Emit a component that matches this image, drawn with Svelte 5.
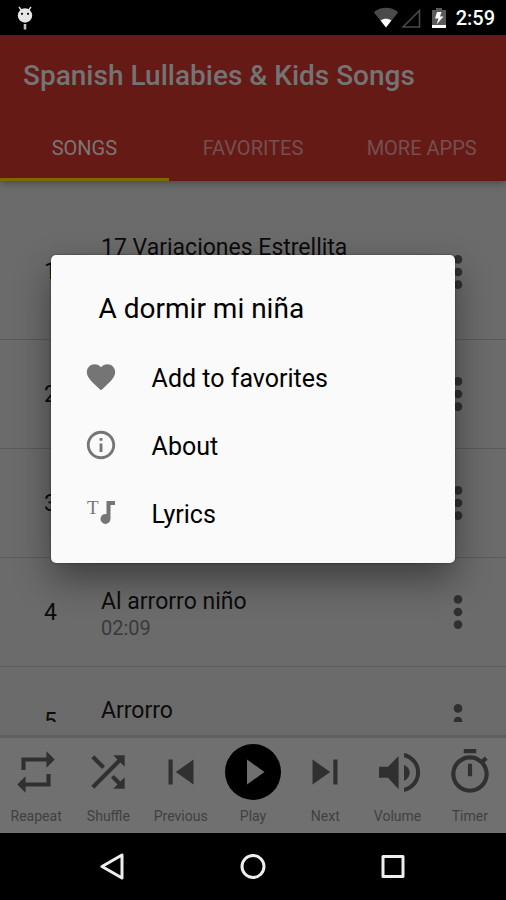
<script lang="ts">
  type Song = { id: number; title?: string; duration?: string; tall?: boolean };

  const tabs = ['SONGS', 'FAVORITES', 'MORE APPS'];
  let activeTab = $state('SONGS');
  let dialogOpen = $state(true);

  const songs: Song[] = [
    { id: 1, title: '17 Variaciones Estrellita', tall: true },
    { id: 2 },
    { id: 3 },
    { id: 4, title: 'Al arrorro niño', duration: '02:09' },
    { id: 5, title: 'Arrorro' },
  ];

  const controls = [
    { label: 'Reapeat', path: 'M7 7h10v3l4-4-4-4v3H5v6h2V7zm10 10H7v-3l-4 4 4 4v-3h12v-6h-2v4z' },
    {
      label: 'Shuffle',
      path: 'M10.59 9.17L5.41 4 4 5.41l5.17 5.17 1.42-1.41zM14.5 4l2.04 2.04L4 18.59 5.41 20 17.96 7.46 20 9.5V4h-5.5zm.33 9.41l-1.41 1.41 3.13 3.13L14.5 20H20v-5.5l-2.04 2.04-3.13-3.13z',
    },
    { label: 'Previous', path: 'M6 6h2v12H6zm3.5 6l8.5 6V6z' },
    { label: 'Play', path: '' },
    { label: 'Next', path: 'M6 18l8.5-6L6 6v12zM16 6v12h2V6h-2z' },
    {
      label: 'Volume',
      path: 'M2.9 9.5v5.3h4.3l5.1 5.5V4.3L7.2 9.5zM14.9 8.6c1.6.6 2.7 2 2.7 3.7s-1.1 3.2-2.7 3.9zM14.9 2.9v2c3.4.8 5.8 3.8 5.8 7.3s-2.4 6.5-5.8 7.3v2.1c4.4-.9 7.700-4.800 7.700-9.400s-3.300-8.400-7.700-9.300z',
    },
    {
      label: 'Timer',
      path: 'M15 1H9v2h6V1zm-4 13h2V8h-2v6zm8.03-6.61l1.42-1.42c-.43-.51-.9-.99-1.41-1.41l-1.42 1.42C16.07 4.74 14.12 4 12 4c-4.97 0-9 4.03-9 9s4.02 9 9 9 9-4.03 9-9c0-2.12-.74-4.07-1.97-5.61zM12 20c-3.87 0-7-3.13-7-7s3.13-7 7-7 7 3.13 7 7-3.13 7-7 7z',
    },
  ];
</script>

<div class="screen">
  <div class="status-bar">
    <svg class="debug" width="16" height="24" viewBox="0 0 16 24" aria-hidden="true">
      <path d="M2 1l3 4M14 1l-3 4" stroke="#e6e6e6" stroke-width="1.4" />
      <circle cx="8" cy="9.5" r="7.2" fill="#e6e6e6" />
      <circle cx="5" cy="7.800" r="1.1" />
      <circle cx="11" cy="7.800" r="1.1" />
      <path d="M8 18v5.500" stroke="#c4c4c4" stroke-width="2.6" />
    </svg>
    <svg width="26" height="22" viewBox="0 0 26 22" aria-hidden="true">
      <path d="M.8 5.2C8 -.6 18 -.6 25.2 5.2L13 20.4z" fill="#4a4a4a" />
      <path d="M7.6 13.6c3.2-2.4 7.6-2.4 10.8 0L13 20.4z" fill="#fff" />
    </svg>
    <svg class="signal" width="20" height="22" viewBox="0 0 20 22" aria-hidden="true">
      <path d="M2 20L18.5 3.5V20z" fill="none" stroke="#4a4a4a" stroke-width="1.6" />
    </svg>
    <svg class="battery" width="14" height="22" viewBox="0 0 14 22" aria-hidden="true">
      <path d="M4 1h6v2h4v18H0V3h4z" fill="#5a5a5a" />
      <path d="M0 18h14v3H0z" fill="#fff" />
      <path d="M9.5 5H5L3 11.5h3.5L4.5 17.5 11.5 9.5H8z" fill="#fff" />
    </svg>
    <span class="clock">2:59</span>
  </div>

  <header class="app-bar">
    <h1>Spanish Lullabies &amp; Kids Songs</h1>
    <nav class="tabs">
      {#each tabs as tab (tab)}
        <button class="tab" class:active={activeTab === tab} onclick={() => (activeTab = tab)}>{tab}</button>
      {/each}
    </nav>
  </header>

  <main class="content">
    <ul class="songs">
      {#each songs as song (song.id)}
        <li class="song">
          <span class="number">{song.id}</span>
          <div class="info" class:tall={song.tall}>
            {#if song.title}
              <span class="title">{song.title}</span>
            {/if}
            {#if song.duration}
              <span class="duration">{song.duration}</span>
            {/if}
          </div>
          <button class="more" aria-label="Song options" onclick={() => (dialogOpen = true)}>
            <svg width="10" height="36" viewBox="0 0 10 36" aria-hidden="true">
              <circle cx="5" cy="5.4" r="4.3" />
              <circle cx="5" cy="18" r="4.3" />
              <circle cx="5" cy="30.6" r="4.3" />
            </svg>
          </button>
        </li>
      {/each}
    </ul>
  </main>

  <footer class="player">
    {#each controls as control (control.label)}
      <button class="control">
        {#if control.label === 'Play'}
          <svg width="56" height="56" viewBox="0 0 56 56" aria-hidden="true">
            <circle cx="28" cy="28" r="28" fill="#000" />
            <path d="M22 15.5v25l17.5-12.5z" fill="#707070" />
          </svg>
        {:else}
          <svg width="50" height="56" viewBox="0 0 24 24" aria-hidden="true"><path d={control.path} /></svg>
        {/if}
        <span>{control.label}</span>
      </button>
    {/each}
  </footer>

  <nav class="system-nav">
    <button aria-label="Back">
      <svg width="28" height="28" viewBox="0 0 28 28" aria-hidden="true"><path d="M3 13.5L23 2v23z" /></svg>
    </button>
    <button aria-label="Home">
      <svg width="28" height="28" viewBox="0 0 28 28" aria-hidden="true"><circle cx="14" cy="13.5" r="11" /></svg>
    </button>
    <button aria-label="Recent apps">
      <svg width="28" height="28" viewBox="0 0 28 28" aria-hidden="true"><rect x="4" y="3.5" width="20" height="20" /></svg>
    </button>
  </nav>

  {#if dialogOpen}
    <div class="overlay">
      <div class="dialog" role="dialog" aria-labelledby="dialog-title">
        <h2 id="dialog-title">A dormir mi niña</h2>
        <button class="option">
          <svg width="34" height="34" viewBox="0 0 24 24" aria-hidden="true">
            <path d="M12 21.35l-1.45-1.32C5.4 15.36 2 12.28 2 8.5 2 5.42 4.42 3 7.5 3c1.74 0 3.41.81 4.5 2.09C13.09 3.81 14.76 3 16.5 3 19.58 3 22 5.42 22 8.5c0 3.78-3.4 6.86-8.55 11.54L12 21.35z" />
          </svg>
          Add to favorites
        </button>
        <button class="option">
          <svg width="34" height="34" viewBox="0 0 24 24" aria-hidden="true">
            <path d="M11 17h2v-6h-2v6zm1-15C6.48 2 2 6.48 2 12s4.48 10 10 10 10-4.48 10-10S17.52 2 12 2zm0 18c-4.41 0-8-3.59-8-8s3.59-8 8-8 8 3.59 8 8-3.59 8-8 8zM11 9h2V7h-2v2z" />
          </svg>
          About
        </button>
        <button class="option">
          <svg width="34" height="34" viewBox="0 0 34 34" aria-hidden="true">
            <text x="3" y="18" font-family="Liberation Serif, serif" font-size="19">T</text>
            <path d="M22.5 5H31v4h-4.500v14a5 5 0 1 1-4-5z" />
          </svg>
          Lyrics
        </button>
      </div>
    </div>
  {/if}
</div>

<style>
  :global(body) {
    background: #000;
  }

  .screen {
    position: relative;
    display: flex;
    flex-direction: column;
    height: 100vh;
    overflow: hidden;
    font-family: Roboto, sans-serif;
    background: #6b6b6b;
  }

  button {
    padding: 0;
    border: none;
    background: none;
    font-family: inherit;
    cursor: pointer;
  }

  .status-bar {
    display: flex;
    align-items: center;
    flex-shrink: 0;
    height: 36px;
    padding: 0 11px 0 17px;
    box-sizing: border-box;
    background: #000;
  }

  .debug {
    margin-right: auto;
  }

  .signal {
    margin-left: 2px;
  }

  .battery {
    margin: 0 10px 0 11px;
  }

  .clock {
    color: #fff;
    font-size: 20px;
    font-weight: 500;
    line-height: 24px;
  }

  .app-bar {
    position: relative;
    flex-shrink: 0;
    margin-top: -1px;
    background: #661a16;
    box-shadow: 0 1px 8px rgba(0, 0, 0, 0.4);
  }

  h1 {
    margin: 0;
    padding: 0 23px;
    color: #747474;
    font-size: 28px;
    font-weight: 500;
    line-height: 82px;
    white-space: nowrap;
  }

  .tabs {
    display: grid;
    grid-template-columns: repeat(3, 1fr);
  }

  .tab {
    height: 64px;
    padding-top: 1px;
    border-bottom: 3px solid transparent;
    color: #74504e;
    font-size: 20px;
  }

  .tab.active {
    border-bottom-color: #7a6a00;
    color: #7a7674;
  }

  .content {
    flex: 1;
    min-height: 0;
    padding-bottom: 13px;
  }

  .songs {
    height: 100%;
    margin: 0;
    padding: 23px 0 0;
    box-sizing: border-box;
    overflow: hidden;
    list-style: none;
  }

  .song {
    display: flex;
    align-items: center;
    padding: 24px 0;
    border-bottom: 1px solid #5a5a5a;
  }

  .number {
    width: 101px;
    text-align: center;
    color: #0b0b0b;
    font-size: 23px;
  }

  .info {
    display: flex;
    flex: 1;
    flex-direction: column;
    min-height: 54px;
    padding-top: 6px;
    line-height: 27px;
  }

  .info.tall {
    min-height: 81px;
  }

  .title {
    color: #0b0b0b;
    font-size: 23px;
  }

  .duration {
    color: #3a3a3a;
    font-size: 20px;
  }

  .more {
    display: flex;
    justify-content: center;
    width: 96px;
    fill: #303030;
  }

  .player {
    display: grid;
    grid-template-columns: repeat(7, 1fr);
    flex-shrink: 0;
    padding: 6px 0 7px;
    border-top: 3px solid #606060;
    background: #707070;
  }

  .control {
    display: flex;
    flex-direction: column;
    align-items: center;
    gap: 6px;
    color: #404040;
    fill: #303030;
    font-size: 14px;
    line-height: 20px;
  }

  .system-nav {
    display: grid;
    grid-template-columns: repeat(3, 1fr);
    flex-shrink: 0;
    height: 67px;
    padding: 0 43px;
    background: #000;
  }

  .system-nav button {
    display: flex;
    align-items: center;
    justify-content: center;
    fill: none;
    stroke: #eee;
    stroke-width: 3;
    stroke-linejoin: round;
  }

  .overlay {
    position: absolute;
    inset: 0;
    display: flex;
    align-items: center;
    justify-content: center;
    padding-bottom: 82px;
  }

  .dialog {
    width: 80%;
    padding: 36px 0 15px;
    border-radius: 5px;
    box-sizing: border-box;
    background: #fafafa;
    box-shadow: 0 16px 36px rgba(0, 0, 0, 0.42), 0 0 2px rgba(0, 0, 0, 0.5);
  }

  h2 {
    margin: 0 0 17px;
    padding: 0 48px;
    color: #000;
    font-size: 28px;
    font-weight: 400;
    line-height: 36px;
  }

  .option {
    display: flex;
    align-items: center;
    gap: 34px;
    width: 100%;
    height: 68px;
    padding: 0 33px;
    color: #000;
    fill: #757575;
    font-size: 25px;
    text-align: left;
  }

  .option svg {
    margin-bottom: 2px;
  }
</style>
